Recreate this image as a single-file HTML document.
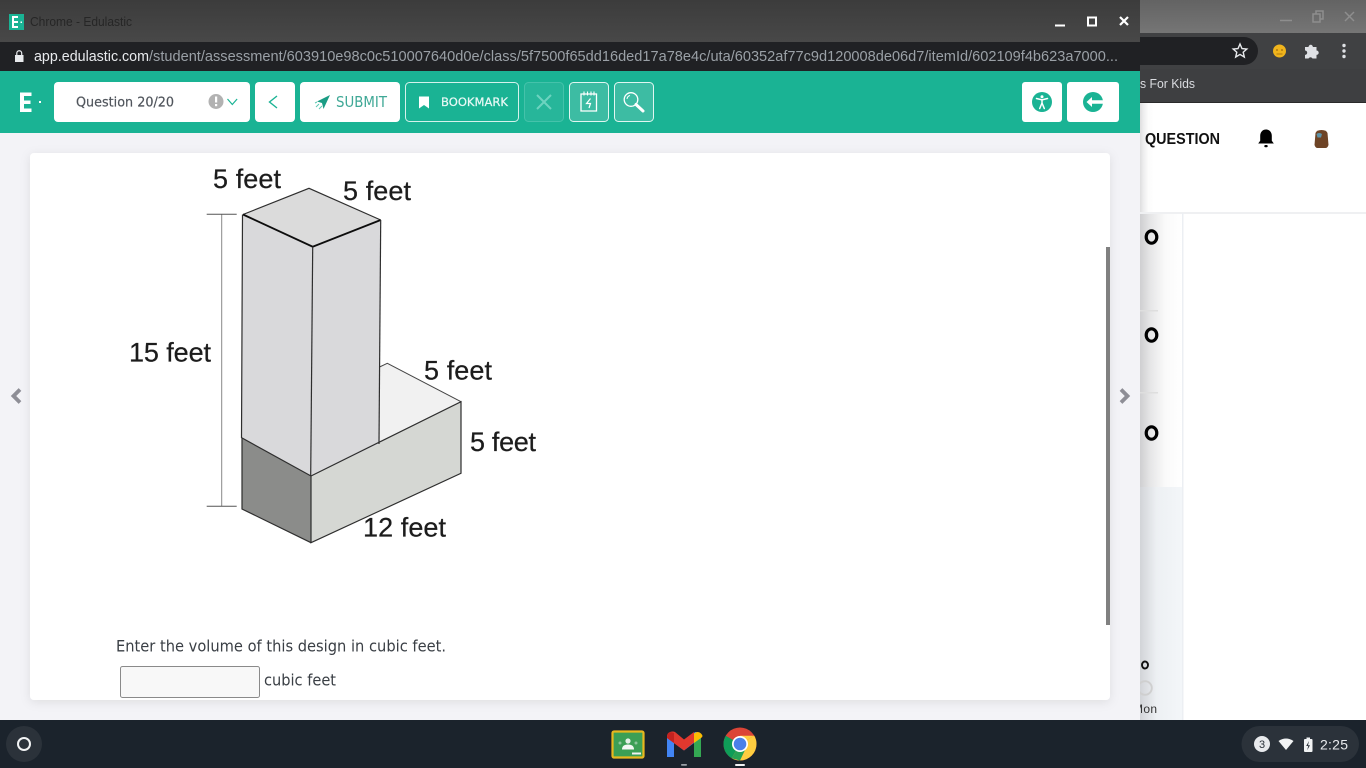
<!DOCTYPE html>
<html lang="en">
<head>
<meta charset="utf-8">
<title>Chrome - Edulastic</title>
<style>
html,body{margin:0;padding:0;width:1366px;height:768px;overflow:hidden;background:#fff}
svg{display:block}
text{font-family:"Liberation Sans",sans-serif}
.os{font-family:"DejaVu Sans",sans-serif}
</style>
</head>
<body>
<svg xmlns="http://www.w3.org/2000/svg" width="1366" height="768" viewBox="0 0 1366 768">
<defs>
<linearGradient id="tbar" x1="0" y1="0" x2="0" y2="1"><stop offset="0" stop-color="#3c3c3c"/><stop offset="1" stop-color="#484848"/></linearGradient>
<linearGradient id="rbar" x1="0" y1="0" x2="0" y2="1"><stop offset="0" stop-color="#636363"/><stop offset="1" stop-color="#767676"/></linearGradient>
<linearGradient id="shade" x1="0" y1="0" x2="1" y2="0"><stop offset="0" stop-color="#cfcfd1"/><stop offset="0.25" stop-color="#e6e6e7"/><stop offset="0.6" stop-color="#fafafa"/><stop offset="1" stop-color="#fff"/></linearGradient>
<linearGradient id="shade2" x1="0" y1="0" x2="1" y2="0"><stop offset="0" stop-color="#d2d4d8"/><stop offset="0.4" stop-color="#edf0f3"/><stop offset="1" stop-color="#f3f6f9"/></linearGradient>
<filter id="cardsh" x="-3%" y="-3%" width="106%" height="106%"><feDropShadow dx="0" dy="2" stdDeviation="5" flood-color="#000" flood-opacity="0.09"/></filter>
<filter id="soft"><feGaussianBlur stdDeviation="0.3"/></filter>
</defs>

<!-- Background window -->
<rect x="1140" y="0" width="226" height="34" fill="url(#rbar)"/>
<rect x="1140" y="33" width="226" height="36" fill="#404143"/>
<rect x="1140" y="69" width="226" height="33" fill="#3e3f41"/>
<rect x="1140" y="102" width="226" height="1" fill="#2a2a2a"/>
<path d="M1140 37H1244a14 14 0 0 1 0 28H1140z" fill="#202124"/>
<path d="M1240 44l2 4.600 4.800.4-3.600 3.200 1.100 4.800-4.300-2.600-4.300 2.600 1.100-4.800-3.600-3.200 4.800-.4z" fill="none" stroke="#e8eaed" stroke-width="1.400"/>
<circle cx="1279.500" cy="51" r="6.500" fill="#f0b41c"/><circle cx="1277" cy="50" r="1" fill="#b07a10"/><circle cx="1282" cy="50" r="1" fill="#b07a10"/><path d="M1276.500 54h6" stroke="#b07a10" stroke-width="1"/>
<path d="M1305 47h3.500a2.200 2.200 0 0 1 4.400 0h3.600v3.500a2.200 2.200 0 0 1 0 4.400v3.600h-4a2.200 2.200 0 0 0-4 0h-3.500v-3.600a2.200 2.200 0 0 0 0-4.400z" fill="#dfe1e5"/>
<circle cx="1344" cy="45.500" r="1.700" fill="#dfe1e5"/><circle cx="1344" cy="51" r="1.700" fill="#dfe1e5"/><circle cx="1344" cy="56.500" r="1.700" fill="#dfe1e5"/>
<text x="1140" y="88" font-size="13" fill="#dadce0" textLength="55" lengthAdjust="spacingAndGlyphs">s For Kids</text>
<path d="M1280 20.500h12" stroke="#8e8e8e" stroke-width="1.500"/>
<path d="M1313 14h7v8h-7z M1316 14v-3h7v8h-3" fill="none" stroke="#8e8e8e" stroke-width="1.500"/>
<path d="M1345 12l9 9M1354 12l-9 9" stroke="#8e8e8e" stroke-width="1.500"/>

<rect x="1140" y="103" width="226" height="617" fill="#fff"/>
<rect x="1140" y="103" width="14" height="111" fill="url(#shade)" opacity=".7"/>
<text x="1145" y="144" font-size="15.500" font-weight="700" fill="#111" textLength="75" lengthAdjust="spacingAndGlyphs">QUESTION</text>
<path d="M1266 129.500c-3.800 0-5.800 3.200-5.800 6.200v5l-2 2.800h15.600l-2-2.800v-5c0-3-2-6.200-5.800-6.200z" fill="#000"/><rect x="1264.300" y="145" width="3.400" height="2.200" rx="1" fill="#000"/>
<path d="M1315.500 133q1-3 6-3t6 3l1 12q-1 3-3 3h-8q-2 0-3-3z" fill="#6e4426"/><path d="M1316.500 134q2.500-2 5.500 0l-1 3.500h-3.500z" fill="#5d93a8"/>
<rect x="1140" y="214" width="42" height="273" fill="url(#shade)"/>
<rect x="1140" y="487" width="42" height="233" fill="url(#shade2)"/>
<rect x="1140" y="212" width="226" height="2" fill="#eff0f2"/>
<rect x="1182" y="213" width="1.500" height="507" fill="#eceff3"/>
<rect x="1140" y="310" width="18" height="1.500" fill="#dedede"/>
<rect x="1140" y="392" width="18" height="1.500" fill="#dedede"/>
<ellipse cx="1151.500" cy="237" rx="5.300" ry="6.200" fill="none" stroke="#000" stroke-width="3.200"/>
<ellipse cx="1151.500" cy="335" rx="5.300" ry="6.200" fill="none" stroke="#000" stroke-width="3.200"/>
<ellipse cx="1151.500" cy="433" rx="5.300" ry="6.200" fill="none" stroke="#000" stroke-width="3.200"/>
<ellipse cx="1145" cy="665" rx="3" ry="3.500" fill="none" stroke="#111" stroke-width="1.900"/>
<circle cx="1145" cy="688" r="6.800" fill="none" stroke="#cfcfcf" stroke-width="1.900"/>
<text x="1133" y="713" font-size="12" fill="#333" textLength="24">Mon</text>

<!-- Front window: content -->
<rect x="0" y="133" width="1140" height="587" fill="#f3f3f7"/>
<rect x="30" y="153" width="1080" height="547" rx="4" fill="#fff" filter="url(#cardsh)"/>
<rect x="1106" y="247" width="4" height="378" fill="#808080"/>
<path d="M20 389.500l-6.500 6.500 6.500 6.500" fill="none" stroke="#8e8e96" stroke-width="3.800"/>
<path d="M1121 389.500l6.500 6.500-6.500 6.500" fill="none" stroke="#8e8e96" stroke-width="3.800"/>

<!-- Figure -->
<g filter="url(#soft)">
<path d="M379.500 367L387.300 363.300 461 401.700 379 444z" fill="#f1f1f1" stroke="none"/>
<path d="M379.500 367L387.300 363.300 461 401.700" fill="none" stroke="#444" stroke-width="1"/>
<path d="M311 476L461 401.700V473.300L311 542.700z" fill="#d5d7d3"/>
<path d="M242 438L311 476V542.700L242.300 509z" fill="#8b8c8a"/>
<path d="M243 214L312.700 246.700 310.700 475.700 241.500 437.700z" fill="#d9d9db"/>
<path d="M312.700 246.700L380.700 220 379 444.300 310.700 475.700z" fill="#d9d9db"/>
<path d="M243 214L309 188.300 380.700 220 312.700 246.700z" fill="#dbdbdb"/>
<g fill="none" stroke="#2f2f2f" stroke-width="1.200">
<path d="M243 214.500L309 188.300 380.700 220"/>
<path d="M243 214.500L312.700 246.700 380.700 220" stroke-width="1.900" stroke="#111"/>
<path d="M242.500 214.500L241.500 437.700 311 476"/>
<path d="M312.700 246.700L310.700 476"/>
<path d="M380.700 220L379 444"/>
<path d="M311 476L461 401.700V473.300L311 542.700V476" />
<path d="M242 438V509L311 542.700"/>
</g>
<path d="M221.700 214.300V506.300" stroke="#888" stroke-width="1" fill="none"/>
<path d="M206.700 214.300H236.700M206.700 506.300H236.700" stroke="#555" stroke-width="1" fill="none"/>
<g font-size="27" fill="#1d1d1d" stroke="#1d1d1d" stroke-width=".25">
<text x="213" y="188" textLength="68">5 feet</text>
<text x="343" y="200" textLength="68">5 feet</text>
<text x="129" y="361.500" textLength="82">15 feet</text>
<text x="424" y="379.500" textLength="68">5 feet</text>
<text x="470" y="451" textLength="66">5 feet</text>
<text x="363" y="536.500" textLength="83">12 feet</text>
</g>
</g>

<!-- Question text -->
<text class="os" x="116" y="651.500" font-size="16" fill="#3a3f45" textLength="330" lengthAdjust="spacingAndGlyphs">Enter the volume of this design in cubic feet.</text>
<rect x="120.500" y="666.500" width="139" height="31" rx="2" fill="#f8f8f8" stroke="#8a8a8a" stroke-width="1"/>
<text class="os" x="264" y="685.500" font-size="16" fill="#3a3f45" textLength="72" lengthAdjust="spacingAndGlyphs">cubic feet</text>

<!-- Title bar -->
<rect x="0" y="0" width="1140" height="42" fill="url(#tbar)"/>
<rect x="9" y="14" width="15" height="16" fill="#1ab394"/>
<path d="M12 17h6M12 22h6M12 27h6M13 16.500v11" stroke="#fff" stroke-width="2" fill="none"/><rect x="20.500" y="21.500" width="1.500" height="1.500" fill="#fff"/>
<text x="30" y="26" font-size="12.500" fill="#262626" textLength="102" lengthAdjust="spacingAndGlyphs">Chrome - Edulastic</text>
<path d="M1055 25.500h10" stroke="#fff" stroke-width="2"/>
<rect x="1088" y="17.500" width="8" height="8" fill="none" stroke="#fff" stroke-width="2"/>
<path d="M1120 17l8 8M1128 17l-8 8" stroke="#fff" stroke-width="2.200"/>

<!-- URL bar -->
<rect x="0" y="42" width="1140" height="29" fill="#202124"/>
<path d="M15 55h8.500v7H15z" fill="#e8eaed"/><path d="M16.800 55v-1.800a2.450 2.450 0 0 1 4.900 0V55" fill="none" stroke="#e8eaed" stroke-width="1.200"/>
<text x="34" y="61" font-size="15" fill="#e8eaed" textLength="115" lengthAdjust="spacingAndGlyphs">app.edulastic.com</text>
<text x="149" y="61" font-size="15" fill="#9aa0a6" textLength="969" lengthAdjust="spacingAndGlyphs">/student/assessment/603910e98c0c510007640d0e/class/5f7500f65dd16ded17a78e4c/uta/60352af77c9d120008de06d7/itemId/602109f4b623a7000...</text>

<!-- Toolbar -->
<rect x="0" y="71" width="1140" height="62" fill="#1ab394"/>
<path d="M20 92.500h11.500v3.500H24v4.500h6.500v3.500H24v4.500h7.500v3.500H20z" fill="#fff"/>
<rect x="39" y="101" width="2" height="2" fill="#fff"/>

<rect x="54" y="82" width="196" height="40" rx="4" fill="#fff"/>
<text class="os" x="76" y="106.500" font-size="13.500" fill="#50555c" stroke="#50555c" stroke-width=".2" textLength="98" lengthAdjust="spacingAndGlyphs">Question 20/20</text>
<circle cx="216" cy="101.500" r="7.500" fill="#b2b2b2"/>
<rect x="215" y="96.500" width="2.200" height="6" fill="#fff"/><rect x="215" y="104" width="2.200" height="2.200" fill="#fff"/>
<path d="M227.500 99l4.800 5.500 4.800-5.500" fill="none" stroke="#1ab394" stroke-width="1.200"/>

<rect x="255" y="82" width="40" height="40" rx="4" fill="#fff"/>
<path d="M277 96l-7.500 6 7.500 6" fill="none" stroke="#1ab394" stroke-width="1.400"/>

<rect x="300" y="82" width="100" height="40" rx="4" fill="#fff"/>
<path d="M330 95l-13 6.500 5 1.500 1.500 6z" fill="#1a9c84"/>
<path d="M316 107l3-3M319 109l3-3M315 103l2-1" stroke="#1ab394" stroke-width="1" opacity=".7"/>
<text class="os" x="336" y="107" font-size="15" fill="#3fa896" textLength="51" lengthAdjust="spacingAndGlyphs">SUBMIT</text>

<rect x="405.500" y="82.500" width="113" height="39" rx="4" fill="#1ab394" stroke="#d5f2ec" stroke-width="1"/>
<path d="M419 96.500h10v12l-5-3.500-5 3.500z" fill="#fff"/>
<text class="os" x="441" y="106" font-size="11.500" fill="#eaf9f6" stroke="#eaf9f6" stroke-width=".2" textLength="67" lengthAdjust="spacingAndGlyphs">BOOKMARK</text>

<rect x="524.500" y="82.500" width="39" height="39" rx="4" fill="#27b69a" stroke="#45c2aa" stroke-width="1"/>
<path d="M537 95l14 14M551 95l-14 14" stroke="#6dd3c0" stroke-width="2"/>

<rect x="569.500" y="82.500" width="39" height="39" rx="4" fill="#3dbca3" stroke="#e0f6f1" stroke-width="1"/>
<path d="M581 94h15.500v17H581z" fill="none" stroke="#fff" stroke-width="1.300"/>
<path d="M584 91.500v4M587.500 91.500v4M591 91.500v4M594 91.500v4" stroke="#fff" stroke-width="1.100"/>
<path d="M590.500 98.500l-4 5h4l-1.500 4.500" fill="none" stroke="#fff" stroke-width="1.200"/>

<rect x="614.500" y="82.500" width="39" height="39" rx="4" fill="#3dbca3" stroke="#e0f6f1" stroke-width="1"/>
<circle cx="631" cy="99.500" r="6.800" fill="none" stroke="#fff" stroke-width="1.300"/>
<path d="M636 104.500l7 6.500" stroke="#fff" stroke-width="3" stroke-linecap="round"/>
<path d="M627 99a4 4 0 0 1 3-3.500" fill="none" stroke="#fff" stroke-width="1"/>

<rect x="1022" y="82" width="40" height="40" rx="3" fill="#fff"/>
<circle cx="1042" cy="102" r="10" fill="#1ab394"/>
<circle cx="1042" cy="96.800" r="1.500" fill="#fff"/>
<path d="M1036.500 98.500l5.500 1.300 5.500-1.300M1042 99.800v3.500M1042 103l-2.300 5.500M1042 103l2.300 5.500" fill="none" stroke="#fff" stroke-width="1.500" stroke-linecap="round"/>

<rect x="1067" y="82" width="52" height="40" rx="3" fill="#fff"/>
<circle cx="1093" cy="102" r="10" fill="#1ab394"/>
<path d="M1086.500 102l5.500-5v3.300h11v3.400h-11v3.300z" fill="#fff"/>

<!-- Shelf -->
<rect x="0" y="720" width="1366" height="48" fill="#1b232c"/>
<circle cx="24" cy="744" r="18" fill="#2b323a"/>
<circle cx="24" cy="744" r="6" fill="none" stroke="#f1f3f4" stroke-width="2"/>

<rect x="612.500" y="731.500" width="31" height="26" rx="1.500" fill="#3c9f55" stroke="#e8b81e" stroke-width="2.200"/>
<circle cx="628" cy="741" r="2.600" fill="#e6efe8"/>
<path d="M622 749.500q0-5 6-5t6 5z" fill="#f3f7f4"/>
<circle cx="620" cy="743" r="1.500" fill="#8cc49b"/><circle cx="636" cy="743" r="1.500" fill="#8cc49b"/>
<rect x="632" y="752.500" width="9" height="2" fill="#f1f1f1"/>

<path d="M667 738q0-6 5-6l1 0 11 9 11-9 1 0q5 0 5 6V757h-7V743l-10 7.500-10-7.500V757h-7z" fill="#4285f4"/>
<path d="M694 743l7-5V757h-7z" fill="#34a853"/>
<path d="M694 743V733.500q4-3 7 0t0 4.500z" fill="#fbbc04"/>
<path d="M667 737q0-4 3-5t5 0l9 7.500 10-7.500v10.500l-10 8-17-12.500z" fill="#e1382e"/>
<path d="M667 738l7 5v-10q-7-3-7 5z" fill="#c5221f"/>
<rect x="681" y="764" width="6" height="1.700" rx=".8" fill="#9aa0a6"/>

<circle cx="740" cy="744" r="16.500" fill="#db4437"/>
<path d="M740 744L725.700 735.700A16.500 16.500 0 0 0 731.700 758.300z" fill="#0f9d58"/>
<path d="M740 744L731.700 758.300A16.500 16.500 0 0 0 740 760.500 16.500 16.500 0 0 0 756.500 744 16.500 16.500 0 0 0 754.300 735.700z" fill="#ffcd40"/>
<path d="M740 744L754.300 735.700H740z" fill="#ffcd40"/>
<path d="M740 744L731.700 758.300 740 760.500 745.500 749z" fill="#0f9d58" opacity=".9"/>
<circle cx="740" cy="744" r="8" fill="#fff"/>
<circle cx="740" cy="744" r="6.300" fill="#4a80e8"/>
<rect x="735" y="764" width="10" height="2" rx="1" fill="#f1f3f4"/>

<!-- Status tray -->
<rect x="1241.500" y="726" width="117.500" height="36" rx="18" fill="#2b323a"/>
<circle cx="1262" cy="744" r="8" fill="#e8eaed"/>
<text x="1262" y="748" font-size="11" text-anchor="middle" fill="#2b323a">3</text>
<path d="M1278.500 741q7.500-5 15 0l-7.500 9z" fill="#f1f3f4"/>
<rect x="1304" y="739" width="8.500" height="13" rx="1" fill="#f1f3f4"/><rect x="1306.500" y="737.500" width="3.500" height="2" fill="#f1f3f4"/>
<path d="M1309 741l-2.800 5h2l-1 4.200 2.800-5h-2z" fill="#2b323a"/>
<text x="1320" y="749.500" font-size="14" fill="#e8eaed" textLength="28">2:25</text>
</svg>
</body>
</html>
